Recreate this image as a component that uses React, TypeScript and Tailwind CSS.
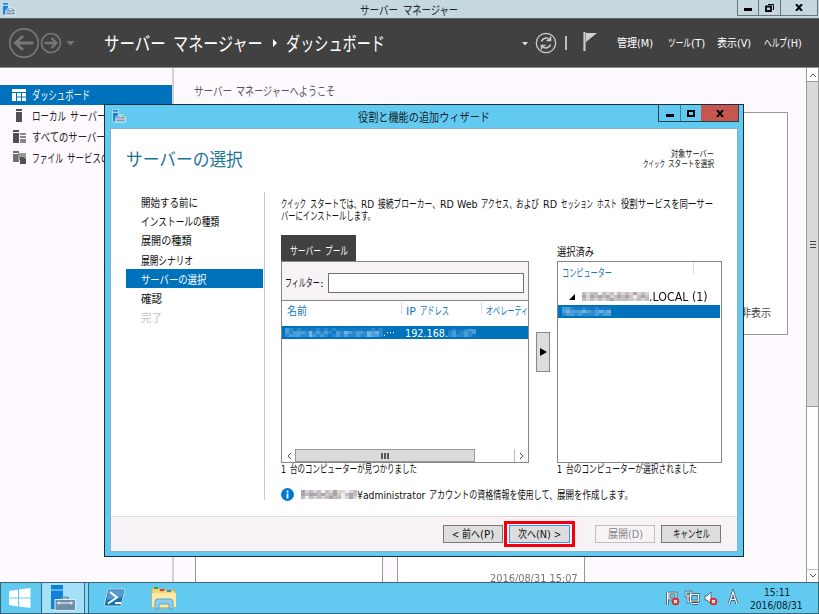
import { useLayoutEffect, useRef, useState } from "react";

const jp = "font-['DejaVu_Sans','Noto_Sans_CJK_JP',sans-serif]";

/* One line of text condensed or widened to an exact width; dy nudges its baseline. */
function Fit({ w, dy = 1, className = "", children }: { w: number; dy?: number; className?: string; children: string }) {
  const ref = useRef<HTMLSpanElement>(null);
  const [scale, setScale] = useState(1);
  useLayoutEffect(() => {
    const measure = () => {
      if (ref.current && ref.current.offsetWidth) setScale(w / ref.current.offsetWidth);
    };
    measure();
    document.fonts?.ready.then(measure);
  }, [w, children]);
  return (
    <span className={`block shrink-0 whitespace-nowrap ${className}`} style={{ width: w }}>
      <span ref={ref} className="inline-block origin-left whitespace-pre" style={{ transform: `translateY(${dy}px) scaleX(${scale})` }}>
        {children}
      </span>
    </span>
  );
}

/* A line whose Latin and Japanese runs each have their own width. */
function Runs({ parts, dy = 1, className = "" }: { parts: [string, number][]; dy?: number; className?: string }) {
  return (
    <div className={`flex shrink-0 ${className}`}>
      {parts.map(([t, w], i) => <Fit key={i} w={w} dy={dy}>{t}</Fit>)}
    </div>
  );
}

/* Pixelated strip that hides a private name: one digit per cell, row by row. */
function Mosaic({ rows, palette, className = "" }: { rows: string[]; palette: string[]; className?: string }) {
  return (
    <div className={`flex shrink-0 flex-col overflow-hidden blur-[0.5px] ${className}`}>
      {rows.map((r, i) => (
        <div key={i} className="flex flex-1">
          {r.split("").map((c, j) => (
            <span key={j} className="flex-1" style={{ backgroundColor: palette[Number(c)] }} />
          ))}
        </div>
      ))}
    </div>
  );
}

const onBlue = ["#1379c2", "#2b8acd", "#4a9dd6", "#72b4e0"];
const onWhite = ["#efedef", "#d9d5d9", "#c2bdc3", "#aaa5ad", "#d3c5bd"];

function ServerIcon({ className = "size-[14px]" }: { className?: string }) {
  return (
    <svg viewBox="0 0 13 13" className={className}>
      <path d="M0.500 0.500h5.500v11.500h-5.500z" fill="#1785dc" stroke="#e4f4fc" strokeWidth=".6" />
      <path d="M.8 3h5" stroke="#d4edfb" />
      <path d="M3.500 8L6 5.500h4L12.500 8v4h-9z" fill="#7f9db5" stroke="#eef6fa" strokeWidth=".8" />
      <path d="M6.500 7h3" stroke="#eef6fa" strokeWidth=".9" />
      <path d="M4 9.300h8" stroke="#e6f0f5" strokeWidth=".8" />
    </svg>
  );
}

function Header() {
  return (
    <header className="flex h-[50px] shrink-0 items-center border-y border-t-[#5e6468] border-b-[#8c8c8c] bg-[#414141] text-white">
      <svg viewBox="0 0 80 48" className="h-12 w-20 shrink-0" fill="none" stroke="#777">
        <circle cx="24" cy="24" r="14.200" strokeWidth="1.700" />
        <path d="M33.500 24H16M23 17l-7.500 7 7.500 7" strokeWidth="2.800" />
        <circle cx="51" cy="24" r="9.500" strokeWidth="1.700" />
        <path d="M44.500 24h11M51.500 19l5 5-5 5" strokeWidth="2.300" />
        <path d="M66.500 22h8l-4 4.500z" fill="#777" stroke="none" />
      </svg>
      <Runs className="ml-6 text-[19px] leading-8" parts={[["サーバー", 62], [" ", 7], ["マネージャー", 90]]} />
      <svg viewBox="0 0 5 8" className="ml-[10px] h-2 w-[5px]"><path d="M0 0l4 4-4 4z" fill="#fff" /></svg>
      <Fit w={99} className="ml-2 text-[19px] leading-8">ダッシュボード</Fit>
      <svg viewBox="0 0 80 48" className="ml-[135px] h-12 w-20 shrink-0" fill="none" stroke="#ccc">
        <path d="M2 23h6l-3 3.500z" fill="#ddd" stroke="none" />
        <circle cx="26" cy="24" r="9.700" strokeWidth="1.300" />
        <path d="M21.500 22.500a4.800 4.800 0 0 1 8-2M30.500 17.500v4h-4M30.500 25.500a4.800 4.800 0 0 1-8 2M21.500 30.500v-4h4" strokeWidth="1.600" />
        <path d="M46 17v14" strokeWidth="1.800" />
        <path d="M64.500 13v19" strokeWidth="2.200" />
        <path d="M66 14h11l-11 9z" fill="#d0d0d0" stroke="none" />
      </svg>
      <nav className="ml-[17px] flex text-[11px] leading-5">
        <Runs className="mr-[15px]" parts={[["管理", 20], ["(M)", 16]]} />
        <Runs className="mr-[12px]" parts={[["ツール", 23], ["(T)", 14]]} />
        <Runs className="mr-[13px]" parts={[["表示", 20], ["(V)", 14]]} />
        <Runs parts={[["ヘルプ", 23], ["(H)", 15]]} />
      </nav>
    </header>
  );
}

const sidebar = [
  { parts: [["ダッシュボード", 58]] as [string, number][], on: true, icon: <path d="M0 1h14v3H0zM0 5h4v8H0zM5 5h4v3.500H5zM10 5h4v3.500h-4zM5 9.500h4V13H5zM10 9.500h4V13h-4z" fill="#fff" /> },
  { parts: [["ローカル", 34], [" ", 4], ["サーバー", 36]] as [string, number][], icon: <path d="M4 0h6v2H4zM4 3h6v10H4z" fill="#505050" /> },
  { parts: [["すべてのサーバー", 74]] as [string, number][], icon: <><path d="M1 0h6v2H1zM1 3h6v10H1z" fill="#505050" /><path d="M8 3h6v2H8zM8 6h6v2H8zM8 9h6v4H8z" fill="#888" /></> },
  { parts: [["ファイル", 31], [" ", 4], ["サービス", 34], ["の", 9]] as [string, number][], icon: <><path d="M1 0h6v2H1zM1 3h6v8H1z" fill="#707070" /><path d="M6 2h8v7H6z" fill="#999" /><path d="M8 6h3l3 2v5H8z" fill="#505050" /></> },
];

function Sidebar() {
  return (
    <aside className="w-[174px] shrink-0 border-r-2 border-[#d4d0d4] pt-[17px] text-[12px] leading-5 text-[#222]">
      {sidebar.map((s, i) => (
        <div key={i} className={`flex items-center overflow-hidden pl-3 ${s.on ? "h-5 bg-[#0072bc] text-white" : "h-[21px]"}`}>
          <svg viewBox="0 0 14 14" className="mr-[6px] size-[14px] shrink-0">{s.icon}</svg>
          <Runs parts={s.parts} />
        </div>
      ))}
    </aside>
  );
}

const steps: [string, number][] = [
  ["開始する前に", 57], ["インストールの種類", 78], ["展開の種類", 51], ["展開シナリオ", 52],
  ["サーバーの選択", 65], ["確認", 21], ["完了", 21],
];

function Caption() {
  return (
    <div className="flex h-[23px] shrink-0 items-start">
      <div className="mt-[4px] ml-[7px] w-[246px]"><ServerIcon /></div>
      <Fit w={132} className="mt-[2px] text-[12px] leading-5 text-[#16242c]">役割と機能の追加ウィザード</Fit>
      <div className="ml-[168px] flex h-[17px] border border-t-0 border-[#28414d]">
        <div className="flex w-[22px] items-center justify-center border-r border-[#3d7f9c]"><span className="mt-1 h-[3px] w-2 bg-black" /></div>
        <div className="flex w-5 items-center justify-center"><span className="h-[7px] w-2 border-2 border-black" /></div>
        <div className="flex w-[37px] items-center justify-center bg-[#c75650]">
          <svg viewBox="0 0 8 7" className="h-[7px] w-2"><path d="M1 0l6 7M7 0L1 7" stroke="#000" strokeWidth="2" /></svg>
        </div>
      </div>
    </div>
  );
}

function ServerPool() {
  return (
    <section className="w-[248px]">
      <div className="flex h-[26px] w-[75px] items-center bg-[#414141] pt-[5px] pl-[9px] text-[11px] leading-4 text-white">
        <Runs parts={[["サーバー", 31], [" ", 4], ["プール", 23]]} />
      </div>
      <div className="flex h-[202px] flex-col overflow-hidden border border-[#868686]">
        <div className="flex h-[39px] shrink-0 items-center border-b border-[#868686] bg-[#f6f2f6] pt-1 pl-[3px] text-[11px]">
          <Runs className="w-[43px]" parts={[["フィルター", 35], [":", 4]]} />
          <div className="h-5 w-[196px] shrink-0 border border-[#707070] bg-white" />
        </div>
        <div className="flex h-[25px] shrink-0 text-[11px] leading-5 text-[#1576bc]">
          <div className="w-[119px] pl-[5px]"><Fit w={20}>名前</Fit></div>
          <i className="mt-px h-3 w-px bg-[#ddd]" />
          <div className="w-[79px] pl-1"><Runs parts={[["IP", 10], [" ", 4], ["アドレス", 29]]} /></div>
          <i className="mt-px h-3 w-px bg-[#ddd]" />
          <div className="w-[46px] overflow-hidden pl-1"><Fit w={42}>オペレーティ</Fit></div>
        </div>
        <div className="flex h-[13px] shrink-0 items-center bg-[#0072bc] pl-[3px] text-[11px] leading-[13px] text-white">
          <Mosaic palette={onBlue} className="h-[9px] w-[98px]" rows={["2101000010101000000000101", "2122213121210213212213231", "1222113212101212112113221"]} />
          <Fit w={12} className="mr-[10px]" dy={0}>.···</Fit>
          <Fit w={43} dy={0.5}>192.168.</Fit>
          <Mosaic palette={onBlue} className="h-2 w-7" rows={["0100122", "1201212", "1211210"]} />
        </div>
        <div className="flex-1" />
        <div className="flex h-[13px] shrink-0 bg-white">
          <div className="flex w-[13px] items-center justify-center"><svg viewBox="0 0 4 6" className="h-[6px] w-1" fill="none" stroke="#444"><path d="M4 0L1 3l3 3" /></svg></div>
          <div className="flex w-[180px] items-center justify-center gap-px border border-[#999] bg-[#dadada]">
            <i className="h-[6px] w-[2px] bg-[#555]" /><i className="h-[6px] w-[2px] bg-[#555]" /><i className="h-[6px] w-[2px] bg-[#555]" />
          </div>
          <div className="flex-1" />
          <div className="flex w-[14px] items-center justify-center border-l border-[#bbb]"><svg viewBox="0 0 4 6" className="h-[6px] w-1" fill="none" stroke="#444"><path d="M0 0l3 3-3 3" /></svg></div>
        </div>
      </div>
      <Runs className="h-[13px] text-[11px] leading-[12px]" parts={[["1", 5], [" ", 4], ["台のコンピューターが見つかりました", 127]]} />
    </section>
  );
}

function Selected() {
  return (
    <section className="ml-[7px] w-[165px]">
      <Fit w={37} className="h-[26px] pt-2 text-[11px] leading-4" dy={2}>選択済み</Fit>
      <div className="h-[202px] w-[165px] border border-[#868686] text-[11px]">
        <div className="flex h-[26px] pl-1 leading-5 text-[#1576bc]"><Fit w={50} dy={1.5}>コンピューター</Fit><i className="ml-[81px] h-3 w-px bg-[#ddd]" /></div>
        <div className="flex h-[17px] items-center pl-[11px] text-[12px] leading-4">
          <svg viewBox="0 0 6 6" className="mr-[7px] size-[6px]"><path d="M6 0v6H0z" /></svg>
          <Mosaic palette={onWhite} className="h-[10px] w-[67px]" rows={["21220212021213121", "31323231232340232", "21212123422241212"]} />
          <Fit w={59} dy={0}>.LOCAL (1)</Fit>
        </div>
        <div className="flex h-[13px] w-[162px] items-center bg-[#0072bc] pl-1"><Mosaic palette={onBlue} className="h-[9px] w-[49px]" rows={["221001001000", "232223212323", "122121112122"]} /></div>
      </div>
      <Runs className="h-[13px] text-[11px] leading-[12px]" parts={[["1", 5], [" ", 4], ["台のコンピューターが選択されました", 131]]} />
    </section>
  );
}

function Wizard() {
  return (
    <div className="absolute top-[104px] left-[104px] flex h-[453px] w-[640px] flex-col border border-[#17303c] bg-[#62caf0] text-[#111]">
      <Caption />
      <div className="mx-[5px] flex h-[424px] flex-col border border-[#8ab2c5] bg-white">
        <div className="flex h-[63px] shrink-0 justify-between">
          <Fit w={117} className="ml-[15px] pt-[16px] text-[18px] leading-7 text-[#1a7496]">サーバーの選択</Fit>
          <div className="mt-5 mr-[23px] flex flex-col items-end gap-[0.500px] text-[9px] leading-[9px]">
            <Fit w={43}>対象サーバー</Fit>
            <Runs parts={[["クイック", 22], [" ", 3], ["スタートを選択", 46]]} />
          </div>
        </div>
        <div className="flex h-[324px] shrink-0">
          <nav className="ml-[15px] flex h-[308px] w-[139px] shrink-0 flex-col border-r border-[#c8c8c8] text-[11.500px]">
            {steps.map(([t, w], i) => (
              <div key={t} className={`flex h-[19.200px] w-[137px] shrink-0 items-center pl-[15px] ${i === 4 ? "bg-[#0072bc] text-white" : i === 6 ? "text-[#c4c4c4]" : ""}`}>
                <Fit w={w} className="leading-[19px]" dy={1.5}>{t}</Fit>
              </div>
            ))}
          </nav>
          <div className="ml-4 flex-1 pt-[6px]">
            <div className="h-[37px] text-[11px] leading-3">
              <Runs parts={[["クイック", 25], [" ", 4], ["スタートでは、", 51], ["RD", 13], [" ", 4], ["接続ブローカー、", 62], ["RD Web", 38], [" ", 3], ["アクセス、", 35], ["および", 23], [" ", 4], ["RD", 14], [" ", 4], ["セッション", 32], [" ", 4], ["ホスト", 20], [" ", 4], ["役割サービスを同一サー", 92]]} />
              <Fit w={94}>バーにインストールします。</Fit>
            </div>
            <div className="flex">
              <ServerPool />
              <div className="mt-[97px] ml-[7px] flex h-10 w-[14px] items-center justify-center border border-[#888] bg-[#ddd]">
                <svg viewBox="0 0 7 8" className="h-2 w-[7px]"><path d="M0 0l7 4-7 4z" /></svg>
              </div>
              <Selected />
            </div>
            <div className="mt-[12px] flex h-[13px] items-center text-[11px] leading-[13px]">
              <svg viewBox="0 0 13 13" className="mr-[7px] size-[13px] shrink-0"><circle cx="6.500" cy="6.500" r="6.400" fill="#0078cf" /><path d="M6.500 2.500v2M6.500 5.500v5" stroke="#fff" strokeWidth="1.800" /></svg>
              <Mosaic palette={onWhite} className="h-[10px] w-14" rows={["31212021311012", "32332342340232", "20212123220131"]} />
              <Runs dy={0.5} parts={[["¥administrator", 68], [" ", 4], ["アカウントの資格情報を使用して、", 128], ["展開を作成します。", 76]]} />
            </div>
          </div>
        </div>
        <footer className="flex min-h-0 flex-1 border-t border-[#dcd8dc] bg-[#f6f2f6] pt-1 pl-[332px] text-[11px] leading-4">
          <button className="mt-[4px] flex h-[18px] w-[60px] items-center justify-center border border-[#777] bg-[#ddd]"><Runs parts={[["<", 7], [" ", 3], ["前へ", 18], ["(P)", 14]]} /></button>
          <div className="ml-[1px] flex h-[26px] w-[71px] items-center justify-center border-[3px] border-[#f5000a]">
            <button className="flex h-[18px] w-[61px] items-center justify-center border border-[#3399ff] bg-[#ddd]"><Runs parts={[["次へ", 18], ["(N)", 15], [" ", 3], [">", 7]]} /></button>
          </div>
          <button className="mt-[4px] ml-5 flex h-[18px] w-[60px] items-center justify-center border border-[#c0bdc0] text-[#888]"><Runs parts={[["展開", 20], ["(D)", 15]]} /></button>
          <button className="mt-[4px] ml-[6px] flex h-[18px] w-[60px] items-center justify-center border border-[#777] bg-[#ddd]"><Fit w={37}>キャンセル</Fit></button>
        </footer>
      </div>
    </div>
  );
}

function Taskbar() {
  return (
    <footer className="flex h-8 shrink-0 items-center border border-[#3c6577] bg-[#62caf0]">
      <svg viewBox="0 0 22 20" className="ml-2 h-5 w-[22px]" fill="#fff"><path d="M0 3l9-1.300V9.500H0zM10 1.500L21.500 0v9.500H10zM0 10.500h9v8L0 17zM10 10.500h11.500V20L10 18.500z" /></svg>
      <div className="ml-[10px] flex h-full w-[44px] items-center border-x border-[#35687e] bg-[#a4e0f8] pl-2">
        <svg viewBox="0 0 26 26" className="size-[26px]"><path d="M1 0h12v24H1z" fill="#0f82d8" /><path d="M1 5h12" stroke="#a4e0f8" /><path d="M12 15v-2.500h6V15" fill="none" stroke="#6c89a1" strokeWidth="1.500" /><path d="M5 14.500h20.500v11H5z" fill="#6f8ea8" stroke="#d9eef8" /><path d="M7 18h16M9 16.500v3M21 16.500v3" stroke="#fff" /></svg>
      </div>
      <div className="h-full w-1 border-r border-[#35687e] bg-[#8ad8f5]" />
      <svg viewBox="0 0 23 20" className="ml-[14px] h-5 w-[23px]"><path d="M5 1h17l-4 17H1z" fill="#1770b3" stroke="#b7d8e8" /><path d="M5.500 2h15.500l-2 7L4 12z" fill="#539bcf" /><path d="M7 4l7 5.500-9 6M12 15h6" fill="none" stroke="#fff" strokeWidth="2" /></svg>
      <svg viewBox="0 0 26 24" className="ml-[25px] h-6 w-[26px]">
        <path d="M1 2h7l1 2h15v18H1z" fill="#f3d573" stroke="#d2ab4a" />
        <path d="M3 1h4v2H3z" fill="#27a844" /><path d="M9 3h4v2H9z" fill="#e23c32" /><path d="M16 4h4v2h-4z" fill="#2d90da" />
        <path d="M1 7h24v14H1z" fill="#fbe9a5" />
        <path d="M4 23v-7q0-3 3-3h12q3 0 3 3v7h-4v-5H8v5z" fill="#8bcdf0" stroke="#5ba3ce" />
      </svg>
      <svg viewBox="0 0 76 18" className="ml-[489px] h-[18px] w-[76px] shrink-0" fill="none" stroke="#fff" strokeWidth="1.200">
        <path d="M1.500 3v13M3 4h7v6H3z" stroke="#345" strokeWidth="2.600" /><path d="M1.500 3v13M3 4h7v6H3z" />
        <path d="M20 3h5v4h-5zM24.500 5.500h8v6.500h-8zM26 14.500h6M22 7v6h3" stroke="#345" strokeWidth="2.300" /><path d="M20 3h5v4h-5zM24.500 5.500h8v6.500h-8zM26 14.500h6M22 7v6h3" />
        <path d="M39 7h2l4-4v12l-4-4h-2z" fill="#fff" stroke="#456" strokeWidth=".8" />
        <circle cx="9.500" cy="12.500" r="3.800" fill="#d52b2b" stroke="none" /><path d="M8 11l3 3M11 11l-3 3" />
        <circle cx="47.500" cy="12.500" r="3.800" fill="#d52b2b" stroke="none" /><path d="M46 11l3 3M49 11l-3 3" />
        <path d="M63 15l4-12 4 12M64.500 10.500h5" stroke="#345" strokeWidth="2.500" /><path d="M63 15l4-12 4 12M64.500 10.500h5" />
      </svg>
      <div className="mb-px ml-[8px] flex flex-col items-center text-[10.500px] leading-[13px] text-[#08222e]">
        <Fit w={26} dy={0.5}>15:11</Fit><Fit w={53} dy={0.5}>2016/08/31</Fit>
      </div>
    </footer>
  );
}

export default function App() {
  return (
    <div className={`relative flex h-[614px] w-[819px] flex-col overflow-hidden bg-[#fdf9fe] ${jp}`}>
      <div className="flex h-[18px] shrink-0 items-start bg-[#c5d8df]">
        <div className="mt-[2px] ml-[2px] w-[358px]"><ServerIcon /></div>
        <Runs dy={2} className="mt-px text-[12px] leading-[17px] text-[#222]" parts={[["サーバー", 38], [" ", 5], ["マネージャー", 55]]} />
        <div className="ml-[279px] flex h-4 border border-t-0 border-[#69757a]">
          <div className="flex w-[21px] items-center justify-center border-r border-[#69757a]"><i className="mt-1 h-[3px] w-2 bg-black" /></div>
          <div className="flex w-[22px] items-center justify-center border-r border-[#69757a]"><svg viewBox="0 0 9 8" className="h-2 w-[9px]" fill="none" stroke="#000"><path d="M1 2.500h5v4.500H1z" strokeWidth="1.800" /><path d="M3 .5h5.500V6" /></svg></div>
          <div className="flex w-9 items-center justify-center"><svg viewBox="0 0 8 7" className="h-[7px] w-2"><path d="M1 0l6 7M7 0L1 7" stroke="#000" strokeWidth="2" /></svg></div>
        </div>
      </div>
      <Header />
      <div className="flex min-h-0 flex-1">
        <Sidebar />
        <main className="flex min-w-0 flex-1 flex-col pl-[20px]">
          <Runs className="pt-[13px] text-[12px] leading-5 text-[#555]" parts={[["サーバー", 38], [" ", 4], ["マネージャーへようこそ", 99]]} />
          <div className="mt-[11px] flex h-[223px] w-[594px] shrink-0 items-end justify-end border border-[#999] bg-white pr-[16px] pb-[12px] text-[11px] leading-5 text-[#444]"><Fit w={30} dy={1.5}>非表示</Fit></div>
          <div className="mt-8 ml-px flex min-h-0 flex-1 gap-[14px]">
            <div className="w-[188px] border border-b-0 border-[#999] bg-white" />
            <div className="flex w-[188px] items-end justify-end overflow-hidden border border-b-0 border-[#999] bg-white pr-[6px] text-[11px] leading-3 text-[#777]"><Fit w={88} className="-mb-[3px]" dy={0}>2016/08/31 15:07</Fit></div>
          </div>
        </main>
        <div className="flex w-[13px] shrink-0 flex-col border-x border-[#999] bg-white">
          <div className="flex h-[13px] shrink-0 items-center justify-center"><svg viewBox="0 0 6 4" className="h-1 w-[6px]" fill="none" stroke="#555"><path d="M0 4l3-3 3 3" /></svg></div>
          <div className="flex h-[326px] flex-col items-center justify-center gap-px border-y border-[#999] bg-[#dadada]"><i className="h-px w-[6px] bg-[#444]" /><i className="mt-px h-px w-[6px] bg-[#444]" /><i className="mt-px h-px w-[6px] bg-[#444]" /></div>
          <div className="flex-1" />
          <div className="flex h-[13px] shrink-0 items-center justify-center border-t border-[#bbb]"><svg viewBox="0 0 6 4" className="h-1 w-[6px]" fill="none" stroke="#555"><path d="M0 0l3 3 3-3" /></svg></div>
        </div>
      </div>
      <Taskbar />
      <Wizard />
    </div>
  );
}
